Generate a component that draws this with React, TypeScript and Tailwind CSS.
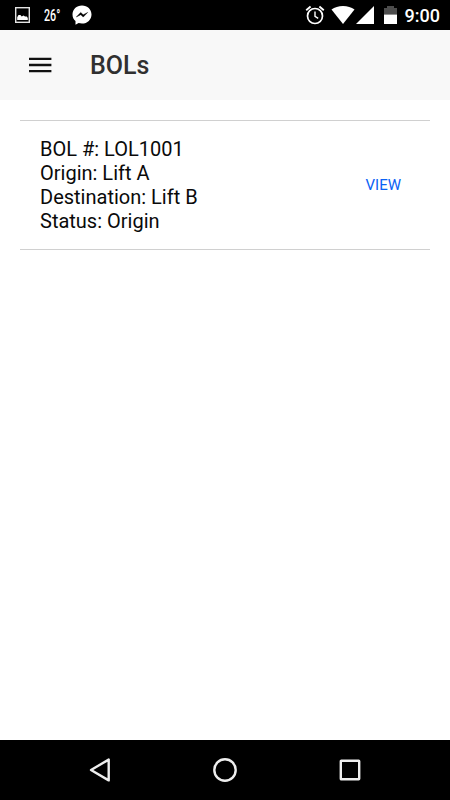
const fields = [
  { label: "BOL #", value: "LOL1001" },
  { label: "Origin", value: "Lift A" },
  { label: "Destination", value: "Lift B" },
  { label: "Status", value: "Origin" },
];

function StatusBar() {
  return (
    <div className="flex h-[30px] items-center bg-black pl-[15px] pr-[10px] text-white">
      <svg width="15" height="16" viewBox="0 0 15 16" fill="none">
        <rect x="0.7" y="0.7" width="13.6" height="14.6" stroke="#e4e4e4" strokeWidth="1.4" />
        <path d="M2.2 13V10.2L3.5 8H5.4L6.7 9.6L8.5 8.4L10 9.6H11.8L12.8 11V13Z" fill="#fff" />
      </svg>
      <div className="ml-[14px] w-4 pt-px">
        <span className="block origin-left scale-x-[0.67] text-base leading-none font-medium">26°</span>
      </div>
      <svg className="ml-3" width="20" height="20" viewBox="0 0 20 20">
        <path
          d="M10 0.4C4.5 0.4 0.5 4.3 0.5 9.4C0.5 12.2 1.6 14.5 3.5 16.1V19.7L6.6 18C7.6 18.3 8.8 18.5 10 18.5C15.5 18.5 19.5 14.5 19.5 9.4C19.5 4.3 15.5 0.4 10 0.4Z"
          fill="#fff"
        />
        <path d="M4.3 12L8.7 7.4L11.2 9.8L15.7 7.4L11.2 12.1L8.8 9.7Z" fill="#000" stroke="#000" strokeWidth="0.4" />
      </svg>

      <svg className="ml-auto" width="20" height="20" viewBox="0 0 20 20" fill="none" stroke="#fff">
        <circle cx="10" cy="11" r="7.5" strokeWidth="1.7" />
        <path d="M10 6.5V11.3L13.2 13.3" strokeWidth="1.4" />
        <path d="M1.2 5.2L5.6 1.6M14.4 1.6L18.8 5.2" strokeWidth="1.9" />
      </svg>
      <svg className="ml-[6px]" width="24" height="18" viewBox="0 0 24 18">
        <path d="M0.5 3.6C3.6 1.3 7.5 0 12 0S20.4 1.3 23.5 3.6L12 18Z" fill="#fff" />
      </svg>
      <svg className="ml-px" width="18" height="18" viewBox="0 0 18 18">
        <path d="M18 0V18H0Z" fill="#fff" />
      </svg>
      <svg className="ml-[10px]" width="13" height="18" viewBox="0 0 13 18">
        <path d="M3 0H10V2H13V8.5H0V2H3Z" fill="#4d4d4d" />
        <path d="M0 8.5H13V18H0Z" fill="#fff" />
      </svg>
      <span className="ml-2 pt-0.5 text-[18px] leading-none font-medium">9:00</span>
    </div>
  );
}

function Header() {
  return (
    <header className="flex h-[70px] items-center bg-[#f8f8f8] pl-[29px]">
      <svg width="23" height="16" viewBox="0 0 23 16" stroke="#111" strokeWidth="2.3" aria-label="Menu">
        <path d="M0 1.8H22.4M0 8H22.4M0 14.2H22.4" />
      </svg>
      <h1 className="ml-[38px] pt-0.5 text-[25px] font-medium text-[#303030]">BOLs</h1>
    </header>
  );
}

function NavBar() {
  return (
    <nav className="flex h-[60px] items-center justify-center gap-[97px] bg-black">
      <svg width="28" height="28" viewBox="0 0 28 28" fill="none" stroke="#eee" strokeWidth="2.4">
        <path d="M5 14L22.7 3.6V24.4Z" strokeLinejoin="round" />
      </svg>
      <svg width="28" height="28" viewBox="0 0 28 28" fill="none" stroke="#eee" strokeWidth="2.4">
        <circle cx="14" cy="14" r="10.7" />
      </svg>
      <svg width="28" height="28" viewBox="0 0 28 28" fill="none" stroke="#eee" strokeWidth="2.4">
        <rect x="4.8" y="4.8" width="18.4" height="18.4" rx="0.5" />
      </svg>
    </nav>
  );
}

export default function App() {
  return (
    <div className="flex h-[800px] w-[450px] flex-col bg-white font-['Roboto',sans-serif] text-black">
      <StatusBar />
      <Header />
      <main className="flex-1 px-5 pt-5">
        <div className="flex items-center justify-between border-y border-[#d0d0d0] py-4 pr-[29px] pl-5">
          <div className="text-[20px] leading-6 text-[#0a0a0a]">
            {fields.map(({ label, value }) => (
              <p key={label}>
                {label}: {value}
              </p>
            ))}
          </div>
          <button className="text-[15px] font-normal text-[#0a62f5]">VIEW</button>
        </div>
      </main>
      <NavBar />
    </div>
  );
}
